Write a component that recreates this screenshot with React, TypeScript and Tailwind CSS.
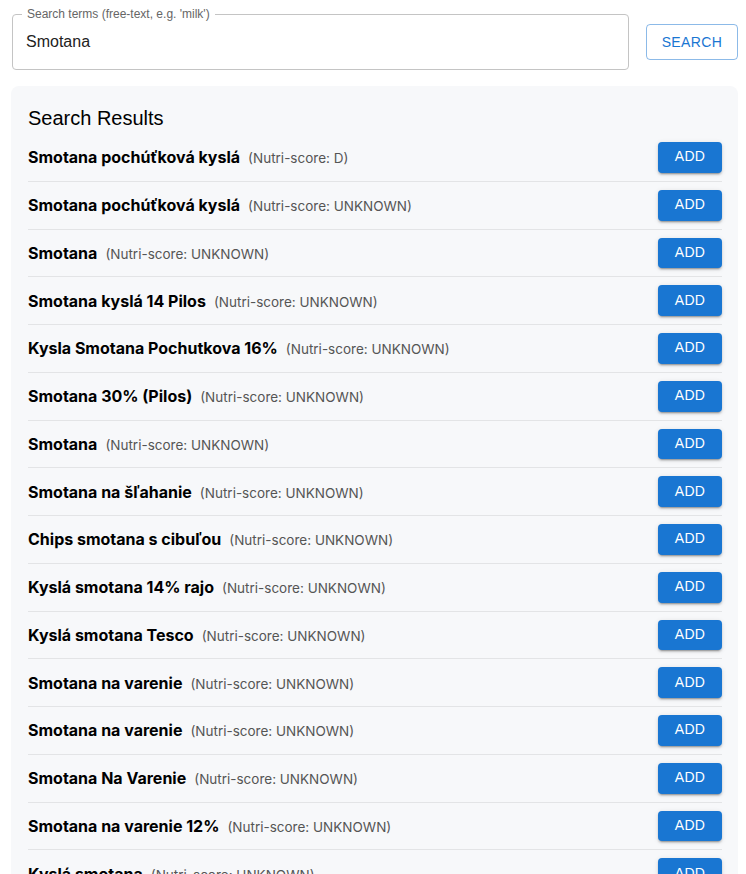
const results: { name: string; score: string }[] = [
  { name: 'Smotana pochúťková kyslá', score: 'D' },
  { name: 'Smotana pochúťková kyslá', score: 'UNKNOWN' },
  { name: 'Smotana', score: 'UNKNOWN' },
  { name: 'Smotana kyslá 14 Pilos', score: 'UNKNOWN' },
  { name: 'Kysla Smotana Pochutkova 16%', score: 'UNKNOWN' },
  { name: 'Smotana 30% (Pilos)', score: 'UNKNOWN' },
  { name: 'Smotana', score: 'UNKNOWN' },
  { name: 'Smotana na šľahanie', score: 'UNKNOWN' },
  { name: 'Chips smotana s cibuľou', score: 'UNKNOWN' },
  { name: 'Kyslá smotana 14% rajo', score: 'UNKNOWN' },
  { name: 'Kyslá smotana Tesco', score: 'UNKNOWN' },
  { name: 'Smotana na varenie', score: 'UNKNOWN' },
  { name: 'Smotana na varenie', score: 'UNKNOWN' },
  { name: 'Smotana Na Varenie', score: 'UNKNOWN' },
  { name: 'Smotana na varenie 12%', score: 'UNKNOWN' },
  { name: 'Kyslá smotana', score: 'UNKNOWN' },
];

const ResultRow = ({ name, score, last }: { name: string; score: string; last: boolean }) => (
  <div className={`flex items-center justify-between py-2 ${last ? '' : 'border-b border-[#e3e4e6]'}`}>
    <div className="flex items-baseline gap-2">
      <span className="font-['Inter',sans-serif] font-bold text-[16px] text-black">{name}</span>
      <span className="font-['Inter',sans-serif] text-[13.5px] text-[#555]">(Nutri-score: {score})</span>
    </div>
    <button className="h-[30.75px] w-16 rounded bg-[#1976d2] pb-px text-white text-[14px] uppercase tracking-[0.3px] font-['Liberation_Sans',Arial,sans-serif] shadow-[0_3px_1px_-2px_rgba(0,0,0,0.2),0_2px_2px_0_rgba(0,0,0,0.14),0_1px_5px_0_rgba(0,0,0,0.12)]">
      Add
    </button>
  </div>
);

export default function App() {
  return (
    <div className="min-h-[874px] bg-white pl-[11px] pr-[8px] pt-[14px] font-['Liberation_Sans',Arial,sans-serif]">
      <div className="flex items-center gap-[17px]">
        <div className="relative ml-px flex h-14 flex-1 items-center rounded border border-[#c4c4c4] px-[13px]">
          <span className="absolute -top-[8px] left-[9px] bg-white px-[5px] text-[12px] leading-[14px] text-[#666]">
            Search terms (free-text, e.g. 'milk')
          </span>
          <span className="text-[16px] text-[#222]">Smotana</span>
        </div>
        <button className="h-[36.5px] w-[92px] rounded border border-[rgba(25,118,210,0.5)] text-[14px] uppercase tracking-[0.4px] text-[#1976d2]">
          Search
        </button>
      </div>
      <div className="mt-4 rounded-lg bg-[#f7f8fa] pl-[17px] pr-[16px] pt-4">
        <h2 className="text-[20px] leading-8 text-black">Search Results</h2>
        <div>
          {results.map((r, i) => (
            <ResultRow key={i} name={r.name} score={r.score} last={i === results.length - 1} />
          ))}
        </div>
      </div>
    </div>
  );
}
